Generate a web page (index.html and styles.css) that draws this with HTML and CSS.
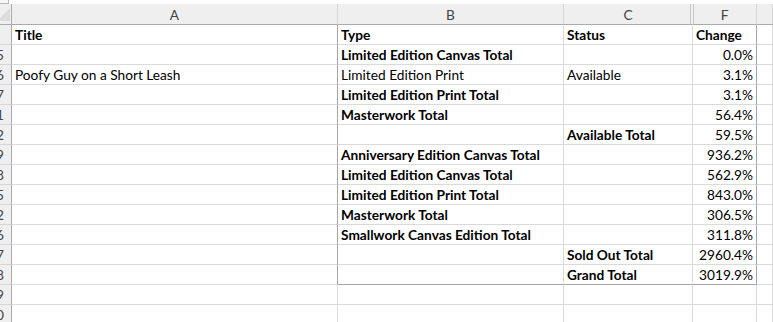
FILE: index.html
```html
<!DOCTYPE html>
<html>
<head>
<meta charset="utf-8">
<link rel="stylesheet" href="styles.css">
</head>
<body>
<div class="topbar"><div class="namebox"></div></div>
<div class="sheet">
  <div class="row head">
    <div class="corner"><svg width="11" height="20" viewBox="0 0 11 20"><polygon points="10,4 10,17 -3,17" fill="#dcdcdc"/></svg></div>
    <div>A</div>
    <div>B</div>
    <div class="hid">C</div>
    <div class="afterhid">F</div>
    <div></div>
  </div>
  <div class="row pv">
    <div class="rh"><span>4</span></div>
    <div class="b">Title</div><div class="b">Type</div><div class="b">Status</div><div class="b">Change</div><div></div>
  </div>
  <div class="row pv">
    <div class="rh"><span>15</span></div>
    <div></div><div class="b">Limited Edition Canvas Total</div><div></div><div class="n">0.0%</div><div></div>
  </div>
  <div class="row pv">
    <div class="rh"><span>16</span></div>
    <div>Poofy Guy on a Short Leash</div><div>Limited Edition Print</div><div>Available</div><div class="n">3.1%</div><div></div>
  </div>
  <div class="row pv">
    <div class="rh"><span>17</span></div>
    <div></div><div class="b">Limited Edition Print Total</div><div></div><div class="n">3.1%</div><div></div>
  </div>
  <div class="row pv">
    <div class="rh"><span>21</span></div>
    <div></div><div class="b">Masterwork Total</div><div></div><div class="n">56.4%</div><div></div>
  </div>
  <div class="row pv">
    <div class="rh"><span>22</span></div>
    <div></div><div></div><div class="b">Available Total</div><div class="n">59.5%</div><div></div>
  </div>
  <div class="row pv">
    <div class="rh"><span>29</span></div>
    <div></div><div class="b">Anniversary Edition Canvas Total</div><div></div><div class="n">936.2%</div><div></div>
  </div>
  <div class="row pv">
    <div class="rh"><span>38</span></div>
    <div></div><div class="b">Limited Edition Canvas Total</div><div></div><div class="n">562.9%</div><div></div>
  </div>
  <div class="row pv">
    <div class="rh"><span>45</span></div>
    <div></div><div class="b">Limited Edition Print Total</div><div></div><div class="n">843.0%</div><div></div>
  </div>
  <div class="row pv">
    <div class="rh"><span>52</span></div>
    <div></div><div class="b">Masterwork Total</div><div></div><div class="n">306.5%</div><div></div>
  </div>
  <div class="row pv">
    <div class="rh"><span>56</span></div>
    <div></div><div class="b">Smallwork Canvas Edition Total</div><div></div><div class="n">311.8%</div><div></div>
  </div>
  <div class="row pv">
    <div class="rh"><span>57</span></div>
    <div></div><div></div><div class="b">Sold Out Total</div><div class="n">2960.4%</div><div></div>
  </div>
  <div class="row pv last">
    <div class="rh"><span>58</span></div>
    <div></div><div></div><div class="b">Grand Total</div><div class="n">3019.9%</div><div></div>
  </div>
  <div class="row">
    <div class="rh"><span>59</span></div>
    <div></div><div></div><div></div><div></div><div></div>
  </div>
  <div class="row">
    <div class="rh"><span>60</span></div>
    <div></div><div></div><div></div><div></div><div></div>
  </div>
</div>
</body>
</html>
```
FILE: styles.css
```css
html, body {
  margin: 0;
  padding: 0;
  background: #ffffff;
  overflow: hidden;
}
body {
  font-family: Lato, "Liberation Sans", sans-serif;
  font-size: 13.7px;
  color: #000000;
}
.topbar {
  height: 4px;
  display: flex;
}
.namebox {
  width: 8px;
  height: 3px;
  border-right: 1px solid #b8b8b8;
  border-bottom: 1px solid #b8b8b8;
  background: #f7f7f7;
}
.sheet {
  display: flex;
  flex-direction: column;
}
.row {
  display: grid;
  grid-template-columns: 12px 326px 226px 129px 64px 1fr;
  height: 20px;
}
.row > div {
  box-sizing: border-box;
  border-right: 1px solid #dadada;
  border-bottom: 1px solid #dadada;
  padding: 0 3px;
  line-height: 19px;
  white-space: nowrap;
  overflow: hidden;
}
.row.head {
  height: 21px;
}
.row.head > div {
  background: #efefef;
  border-bottom-color: #ababab;
  border-right-color: #d6d6d6;
  color: #444444;
  text-align: center;
  line-height: 19px;
  padding-top: 1px;
}
.row.head > div.corner {
  padding: 0;
  border-right-color: #ababab;
}
.corner svg {
  display: block;
}
.row.head > div.hid {
  border-right-color: #efefef;
  box-shadow: inset -1px 0 0 #efefef, inset -2px 0 0 #c8c8c8;
}
.row.head > div.afterhid {
  box-shadow: inset 1px 0 0 #c8c8c8;
}
.row > div.rh {
  background: #efefef;
  border-right-color: #ababab;
  border-bottom-color: #d6d6d6;
  padding: 0;
  display: flex;
  justify-content: flex-end;
  color: #444444;
}
.rh span {
  flex: 0 0 30px;
  text-align: center;
}
.b {
  font-weight: bold;
}
.row > div.n {
  text-align: right;
}
.row.pv > div:nth-child(2) {
  border-right-color: #a6a6a6;
}
.row.pv > div:nth-child(5) {
  border-right-color: #a6a6a6;
}
.row.pv.last > div:nth-child(3),
.row.pv.last > div:nth-child(4),
.row.pv.last > div:nth-child(5) {
  border-bottom-color: #a6a6a6;
}
```
